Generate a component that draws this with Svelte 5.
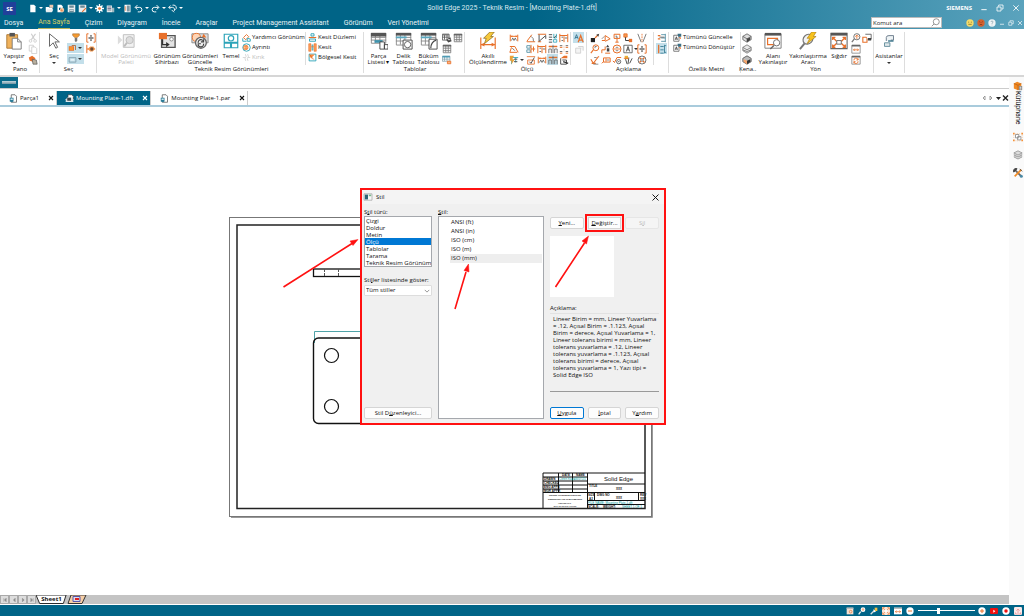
<script>
  const O = '#e8702a';
  const G = '#555';
  const T = '#2ba3b8';

  const icons = {
    newdoc: `<path d="M3 1h5l2 2v8H3z" fill="#fff"/>`,
    open: `<path d="M1 4h4l1 1h4v5H1z" fill="#fff"/><path d="M6 1h5v4H6z" fill="#f0c9b0"/><path d="M3 7h8l-2 4H1z" fill="#e9eef0"/>`,
    docred: `<path d="M2 1h5l2 2v8H2z" fill="#fff"/><path d="M4 5h3v3H4z" fill="#006487"/><circle cx="8" cy="8" r="3" fill="#f0c4a4"/><path d="M7 7v2h2" stroke="${O}" fill="none"/>`,
    save: `<path d="M1 1h9l1 1v9H1z" fill="#e8eef0"/><path d="M3 2h6v3H3zM3 7h6v4H3z" fill="#6b8b98"/><path d="M3.500 8.500h5" stroke="#fff"/>`,
    saveas: `<path d="M1 1h9l1 1v9H1z" fill="#e8eef0"/><path d="M3 2h6v3H3z" fill="#6b8b98"/><path d="M5 10l5-5 1 1-5 5z" fill="${O}"/>`,
    gear: `<path d="M6 0v12M0 6h12M2 2l8 8M10 2l-8 8" stroke="#fff" stroke-width="1.800"/><circle cx="6" cy="6" r="3.600" fill="#fff"/><circle cx="6" cy="6" r="1.800" fill="${O}"/>`,
    props: `<path d="M1 2h7v9H1z" fill="#dfe8ea"/><path d="M2 4h5M2 6h5M2 8h5" stroke="#557"/><path d="M8 5h3v6H8z" fill="#9fb8c0"/>`,
    exit: `<path d="M2 1h8v10H2z" fill="#fff"/><path d="M5 2h4v8H5z" fill="#7c98a4"/><path d="M3 3v6" stroke="${O}"/>`,
    undo: `<path d="M4.500 1.500L1.500 4.500l3 3M2 4.500h5.500a3 3 0 0 1 0 6H5" fill="none" stroke="#fff" stroke-width="1.300"/>`,
    redo: `<path d="M7.500 1.500l3 3-3 3M10 4.500H4.500a3 3 0 0 0 0 6H7" fill="none" stroke="#fff" stroke-width="1.300"/>`,
    history: `<path d="M3.500 2L1 4.500 3.500 7M1 4.500h5a3 3 0 0 1 2 5M6 1.500h2a3.500 3.500 0 0 1 2 6M5 8l3 3" fill="none" stroke="#fff" stroke-width="1.200"/>`,
    cut: `<path d="M4 1l4 7M9 1L4 8" stroke="#ccc" stroke-width="1.300"/><circle cx="3" cy="9.500" r="1.600" fill="none" stroke="#ccc"/><circle cx="8.500" cy="9.500" r="1.600" fill="none" stroke="#ccc"/>`,
    copy: `<path d="M1.500 1.500h5v7h-5z" fill="#fff" stroke="#ccc"/><path d="M4.500 3.500h4l2 2v6h-6z" fill="#fff" stroke="#ccc"/>`,
    brush: `<path d="M1 3l4-2 4 3-3 4-4-1z" fill="${O}"/><path d="M5 5l5 1 1 5-5 0z" fill="#b9b09e" stroke="#555" stroke-width=".8"/>`,
    filter: `<path d="M2 1h8v2L7.500 5.500h-3L2 3z" fill="#f59a30" stroke="#9a6b3c" stroke-width=".7"/><path d="M4.500 6h3v3L6 11 4.500 9.500z" fill="#777"/>`,
    region: `<path d="M1 3h7v6H1z" fill="${O}"/><path d="M5 2h5v6" fill="none" stroke="#b0581c"/><path d="M2 4h5v4H2z" fill="#f9932f"/>`,
    boxsel: `<path d="M1.500 3.500h9v6h-9z" fill="none" stroke="#7b97a5"/><path d="M3.500 5.500h5v2h-5z" fill="#e8f4f8"/>`,
    bracket: `<path d="M3 1H1v10h2M9 1h2v10H9" fill="none" stroke="${O}" stroke-width="1.200"/><path d="M6 2.500v7M3 6h6" stroke="#555"/><path d="M6 2l1 2H5zM6 10l1-2H5zM2.500 6l2-1v2zM9.500 6l-2-1v2z" fill="#555"/>`,
    bracketeye: `<path d="M1 1v10M1 6h3M9 6h2" stroke="${O}" stroke-width="1.200"/><path d="M2 6l3-3h4l2 3-3 3H5z" fill="#f59a50"/><circle cx="7" cy="6" r="2" fill="#6b4a35"/>`,
    aux: `<path d="M2 6l4-4 3 3-4 4z" fill="#fff" stroke="${O}" stroke-width="1.200"/><path d="M1 7v4h5M7 7l4 1v3H7z" fill="#fff" stroke="${T}" stroke-width="1.200"/>`,
    detail: `<circle cx="6" cy="6" r="5" fill="#fff" stroke="${T}" stroke-width="1.200"/><circle cx="5" cy="6" r="3" fill="#ffc18e" stroke="${O}"/><path d="M4 5h3M4 7h3" stroke="${O}"/>`,
    broken: `<path d="M1 6h3M8 6h3M4.500 1.500l1 3-1.500 3 1 3M7.500 1.500l1 3L7 7.500l1 3" fill="none" stroke="#ccc"/>`,
    cutplane: `<path d="M1 6h10" stroke="${O}" stroke-width="1.500"/><path d="M4 1h4v3H4zM2 8h8v3H2z" fill="#fff" stroke="${T}" stroke-width="1.200"/>`,
    section: `<path d="M1 1h3v10H1zM8 1h3v10H8z" fill="#ff9e5a" stroke="${O}" stroke-width=".8"/><path d="M5.500 2.500h1v7h-1z" fill="#fff" stroke="${T}"/><path d="M4.500 5h3" stroke="${O}"/>`,
    broken2: `<path d="M1.500 1.500h9v9h-9z" fill="#fff" stroke="${T}" stroke-width="1.200"/><path d="M2 2h7L5 6l2 3-5-4z" fill="#ff8b3c"/><path d="M2 2l6 7" stroke="#b0581c" stroke-width=".7"/>`,
    tbl: `<path d="M1.500 1.500h9v9h-9zM1.500 5h9M1.500 8h9M4.500 2v8M7.500 2v8" fill="#fff" stroke="#777"/><path d="M1 1h10v2H1z" fill="#666"/>`,
    tblref: `<path d="M.5 1.500h8v7h-8zM.5 5h8M3 2v6M6 2v6" fill="#fff" stroke="#555"/><path d="M.5 1h8v2h-8z" fill="#777"/><path d="M5 8l5-3 1.500 5-4 1.500z" fill="#444"/><path d="M7 8h3" stroke="#fff"/>`,
    tblor: `<path d="M.5 1.500h9v6h-9zM.5 5h9M3 2v5M6 2v5" fill="#fff" stroke="#8aa6b0"/><path d="M.5 1h9v2h-9z" fill="#4d9bb5"/><path d="M6.500 7.500h4v3h-4z" fill="#ffb27d" stroke="${O}"/>`,
    dim: `<path d="M1.500 2v8M10.500 2v8M2 4h8" stroke="${O}" stroke-width="1.200" fill="none"/><path d="M3 9l1.500-3L6 9l1.500-3L9 9" stroke="#666" fill="none"/><path d="M2 4l2-1.300v2.600zM10 4L8 2.700v2.600z" fill="${O}"/>`,
    dimang: `<path d="M1 10.500h10M1 10L7 2" stroke="${O}" stroke-width="1.200"/><path d="M6 4a6 6 0 0 1 3 6" fill="none" stroke="#666"/>`,
    dimang2: `<path d="M1 3h6l4 7M3 4L1 10h9" fill="none" stroke="${O}" stroke-width="1.200"/><path d="M4 5l3 3" stroke="#555"/>`,
    dimbox: `<path d="M1 1.500h10M1 10.500h4" stroke="${O}" stroke-width="1.400"/><path d="M2.500 2v8l8-7v4" fill="none" stroke="#555" stroke-width="1.200"/>`,
    dimlist: `<path d="M1 2h4M1 5h4M1 8h4M1 11h4" stroke="#555" stroke-width="1.200"/><path d="M7 1v5h3V1M6.500 8h4v3h-4z" fill="none" stroke="${T}"/><path d="M7 6l3-3" stroke="#333"/>`,
    coord: `<path d="M1 2h4v3H1zM1 7h4v3H1z" fill="none" stroke="#4b8aa0"/><path d="M6 1v10M6 6h5M9 3v6" stroke="${O}" stroke-width="1.200"/>`,
    dimchain: `<path d="M1 1v10M6 4v7M10.500 1v10M1 3h9" stroke="${O}" stroke-width="1.200"/><path d="M3 5h2M7 6h3M3 9h2" stroke="#555"/>`,
    four: `<path d="M1 2h3M8 2h3M1 9h3M8 9h3" stroke="#555"/><path d="M1 4h3M8 4h3M1 11h3M8 11h3" stroke="${O}" stroke-width="1.200"/><path d="M6 2v8" stroke="#f0b08a" stroke-dasharray="1 1"/>`,
    autodim: `<path d="M3 2v9M3 3h8M8 3v6" stroke="${T}" fill="none"/><path d="M1 1l5 0-2 4 3 0-4 6 0-4H1z" fill="#e9a13a"/><path d="M6 8h4M6 5h4" stroke="#555" stroke-width="1.200"/>`,
    dimcheck: `<path d="M1 2h10M2 6h8v5H2z" fill="none" stroke="${O}"/><path d="M4 8l2 2 4-7" fill="none" stroke="#555" stroke-width="1.200"/>`,
    align: `<path d="M1 11V6h3v5M8 11V6h3v5M1 3h10M6 1v10" fill="none" stroke="#666"/><path d="M1 3h4M7 3h4" stroke="${O}" stroke-width="1.600"/>`,
    track: `<path d="M2 4l4-3h4v3H6z" fill="${O}"/><path d="M2 4v7h7V6H4" fill="none" stroke="#555" stroke-width="1.200"/><path d="M5 8l6 2" stroke="#333" stroke-width="1.400"/>`,
    aa: `<path d="M1 7l2-5 2 5M1.500 5.500h3" fill="none" stroke="#2b6c88"/><path d="M5 11l3-8 3 8M6 8.500h4" fill="none" stroke="${O}" stroke-width="1.500"/>`,
    style: `<path d="M2 5h6v6H2zM5 3h6v5" fill="#f4f4f4" stroke="#ccc"/>`,
    leadera: `<path d="M1 6h5v5H1z" fill="#222"/><path d="M6 6l4-4" stroke="${O}" stroke-width="1.500"/><path d="M11 1L7.500 2l2.500 2.500z" fill="#444"/>`,
    datum: `<path d="M1 9h4M5 9V3l6 4-6 3" fill="none" stroke="${O}" stroke-width="1.200"/><path d="M1 7l3-3" stroke="#777"/>`,
    frame: `<path d="M2.500 1.500h7v5h-7zM6 7v4M4 11h4" fill="none" stroke="${O}" stroke-width="1.200"/><path d="M5 3v2h2" stroke="#555" fill="none"/>`,
    conn: `<path d="M1 1h4v4H1z" fill="#f59a50" stroke="${O}"/><path d="M3 5v4h5" fill="none" stroke="#444" stroke-width="1.200"/><path d="M7 7h4v4H7z" fill="${O}"/>`,
    vlines: `<path d="M1 1l4 10M11 1L7 11" stroke="#666"/><path d="M6 1v10" stroke="${O}" stroke-dasharray="2 1"/>`,
    mag: `<circle cx="7" cy="4.500" r="3.500" fill="#fff" stroke="${O}" stroke-width="1.200"/><path d="M4 7l-3 4" stroke="${O}" stroke-width="1.300"/><path d="M6 5V3h2" stroke="#666" fill="none"/>`,
    weld: `<path d="M1 11V7h4V3M5 11h6" fill="none" stroke="${O}" stroke-width="1.200"/><path d="M8 1l2 3H6zM7 5h3v4H7z" fill="#444"/>`,
    circ: `<circle cx="6" cy="6" r="4.800" fill="#fff" stroke="${O}" stroke-width="1.200"/><path d="M2 6h8" stroke="${O}"/><path d="M4.500 4h3M4.500 8h3" stroke="#777"/>`,
    abox: `<path d="M1 1.500h10v9H1z" fill="#fff" stroke="#555"/><path d="M4 9l2-6 2 6M5 7h2" fill="none" stroke="#333"/>`,
    finish: `<path d="M2 10h5M1 5l3 5 6-8h1" fill="none" stroke="${O}" stroke-width="1.300"/><path d="M5 3h3M4 11h6" stroke="#777"/>`,
    tol: `<path d="M3 3.500h8v5H3zM6 4v4M1 10l2-2" fill="#fff" stroke="${O}" stroke-width="1.200"/><path d="M7 6h3" stroke="#777"/>`,
    balloon: `<path d="M1 7l2 2 3-6h5" fill="none" stroke="${O}" stroke-width="1.200"/><circle cx="8" cy="8" r="2.500" fill="#fff" stroke="#555"/><path d="M7 8h2" stroke="#555"/>`,
    hatch: `<path d="M2 1h4v4H2z" fill="#e9b13a"/><path d="M3 5l2 6M7 3l-1 8M11 4L8 10" stroke="#555" stroke-width="1.200"/><path d="M1 4h6" stroke="${O}"/>`,
    wheel: `<circle cx="6" cy="6" r="4.800" fill="#fff" stroke="#777" stroke-width="1.200"/><path d="M3 3l6 6M9 3L3 9" stroke="${O}" stroke-width="1.600"/><circle cx="6" cy="6" r="1.500" fill="#fff" stroke="#777"/>`,
    levels: `<path d="M10 1v10M10 2H5M10 6H5M10 10H5" stroke="#4b8aa0" fill="none"/><path d="M1 3l3 0M1 7h3" stroke="${O}" stroke-width="1.500"/><path d="M3 5h6" stroke="#555"/>`,
    levels2: `<path d="M9 1v10M9 2h2M9 10h2M4 3h4M4 7h4M4 11h4" stroke="#4b8aa0" fill="none" stroke-width="1.200"/><path d="M2 1v10" stroke="${O}" stroke-width="1.500"/>`,
    textupd: `<path d="M1 3h7v8H1z" fill="#fff" stroke="#555"/><path d="M3 9l1.500-4L6 9M3.500 8h2" fill="none" stroke="#333"/><path d="M6 1h5v4H7z" fill="#3c6f86"/><path d="M8 6h2v2" fill="none" stroke="${O}"/>`,
    cubea: `<path d="M1 4l5-3 5 3v4l-5 3-5-3z" fill="#ddd" stroke="#666"/><path d="M1 4l5 3 5-3M6 7v4" fill="none" stroke="#666"/><path d="M6 7l4-2v3l-4 3z" fill="#444"/>`,
    cubeb: `<path d="M1 4l5-3 5 3v4l-5 3-5-3z" fill="#e8e8e8" stroke="#777"/><path d="M1 4l5 3 5-3M1 7l5 2 5-2" fill="none" stroke="#777"/>`,
    cubec: `<path d="M1 4l5-3 5 3v4l-5 3-5-3z" fill="#bbb" stroke="#555"/><path d="M2 5l4 2v4L2 8z" fill="#f5a56b"/><path d="M6 7l4-2v3l-4 3z" fill="#333"/>`,
    zoomup: `<circle cx="7" cy="4.500" r="3.700" fill="#fff" stroke="#777" stroke-width="1.200"/><path d="M4 7l-3 4" stroke="#777" stroke-width="1.500"/><path d="M7 7V2.500M5 4.500l2-2 2 2" fill="none" stroke="${O}"/>`,
    winbox: `<path d="M1 5h5v6H1z" fill="#fff" stroke="${O}" stroke-width="1.300"/><path d="M4 1.500h7v6H7" fill="#fff" stroke="#555"/><path d="M7 6h4v3H7z" fill="#444"/>`,
    pan: `<path d="M1 1.500h10v9.500H1z" fill="#fff" stroke="#888"/><path d="M1 1h10v2H1z" fill="#666"/><path d="M3 7h6M4.500 5.500L3 7l1.500 1.500M7.500 5.500L9 7 7.500 8.500" fill="none" stroke="${O}"/>`,
    refresh: `<path d="M1 1.500h10v9.500H1z" fill="#fff" stroke="#888"/><path d="M1 1h10v2H1z" fill="#666"/><path d="M3.500 6.500a2.500 2.500 0 0 1 5-.5M8.500 7.500a2.500 2.500 0 0 1-5 .5M8.500 4v2h-2M3.500 10V8h2" fill="none" stroke="${O}"/>`,
    part: `<path d="M3 1h5l2 2v8H3z" fill="#fff" stroke="#555"/><path d="M1 5h5v5l-2 1-3-1z" fill="#2b7c98"/><path d="M2 6h3v2H2z" fill="#cfe7ef"/>`,
    draft: `<path d="M4 1h5l2 2v5H4z" fill="#fff" stroke="#333" stroke-width=".8"/><path d="M1 7l3-3h4l3 3v3H1z" fill="#d7dde0"/><path d="M3 5h5v4H3z" fill="#39444a"/><path d="M1 10h10" stroke="#fff"/>`,
    lib: `<path d="M1 3l4-2 5 2v6l-4 2-5-2z" fill="#f08a24"/><path d="M1 3l5 2 4-2M6 5v6" fill="none" stroke="#b85c10" stroke-width=".8"/><path d="M7 6h4v5H7z" fill="#888"/><path d="M8 7.500h2M8 9.500h2" stroke="#fff"/>`,
    group: `<path d="M3 3h4v4H3zM5.500 5.500h4v4h-4z" fill="#fff" stroke="#888"/><path d="M0 1h2v2H0zM10 1h2v2h-2zM0 9h2v2H0zM10 9h2v2h-2z" fill="#f5923a"/><path d="M3 2h6M1 4v4M3 10.500h6M11 4v4" stroke="#f0b078" stroke-dasharray="1 1" stroke-width=".8"/>`,
    layers: `<path d="M1 3.500l5-2.500 5 2.500v5l-5 2.500-5-2.500z" fill="#ccc"/><path d="M1 3.500l5-2.500 5 2.500-5 2.500zM1 5.800l5 2.500 5-2.500M1 8.300l5 2.500 5-2.500" fill="#ddd" stroke="#888" stroke-width=".8"/>`,
    tools: `<path d="M2 2l8 8" stroke="#666" stroke-width="2.200"/><path d="M10 2L2 10" stroke="#f08a24" stroke-width="2"/><path d="M0 3l3-3 2 1-4 4zM8 1l3 3" fill="#444" stroke="#444"/><circle cx="10" cy="10" r="1.800" fill="#4a8aa5"/>`,
    s1: `<path d="M1 1h10v10H1z" fill="#f3dfd2"/><path d="M1 1h10v2H1z" fill="#bbb"/><circle cx="7" cy="7" r="2" fill="none" stroke="${O}"/>`,
    s2: `<circle cx="7.500" cy="4" r="3.500" fill="#fff"/><path d="M4 7l-3 4" stroke="#eee" stroke-width="2"/><path d="M7.500 6V2.500M6 4l1.500-1.500L9 4" fill="none" stroke="${O}"/>`,
    s3: `<path d="M7 1h4v5H7z" fill="#f5c242"/><path d="M1 11l6-6" stroke="#ddd" stroke-width="2"/><path d="M5 3l4 4-3 1z" fill="#fff"/>`,
    s4: `<path d="M0 0h12v12H0z" fill="#fbe6d8"/><path d="M2 2l8 8M10 2l-8 8" stroke="${O}"/><path d="M1 4V1h3M8 1h3v3M11 8v3H8M4 11H1V8" fill="none" stroke="${O}"/><path d="M4 4h4v4H4z" fill="#fff"/>`,
    s5: `<path d="M0 1h12v10H0z" fill="#fff"/><path d="M0 1h12v2H0z" fill="#bbb"/><path d="M2 7h8M4 5.500L2 7l2 1.500M8 5.500L10 7 8 8.500" fill="none" stroke="${O}"/>`,
    minus: `<circle cx="6" cy="6" r="5.500" fill="#fff"/><path d="M3 6h6" stroke="${O}" stroke-width="1.500"/>`,
    plus: `<circle cx="6" cy="6" r="5.500" fill="#fff"/><path d="M3 6h6M6 3v6" stroke="${O}" stroke-width="1.500"/>`,
    yt: `<rect x="0" y="1.500" width="12" height="9" rx="2" fill="#e11"/><path d="M5 4l3 2.200L5 8.500z" fill="#fff"/>`,
    rec: `<circle cx="6" cy="6" r="5.500" fill="#fff"/><circle cx="6" cy="6" r="2.600" fill="#e11"/>`,
    up: `<rect width="12" height="12" rx="2" fill="#fbe9e9"/><path d="M6 9V3M3.500 5.500L6 3l2.500 2.500M2 8v2.500h8V8" fill="none" stroke="#e9898b"/>`,
    min: `<path d="M2 8.500h8" stroke="#fff" stroke-width="1.400"/>`,
    restore: `<path d="M1.500 4.500h6v6h-6zM4 4V1.500h6.500v6H8" fill="none" stroke="#fff" stroke-width="1.200"/>`,
    close: `<path d="M2 2l8 8M10 2l-8 8" stroke="currentColor" stroke-width="1.300"/>`,
    closeb: `<path d="M2 2l8 8M10 2l-8 8" stroke="currentColor" stroke-width="2.200"/>`,
    happy: `<circle cx="6" cy="6" r="5.500" fill="#f6dc6b"/><path d="M4 4v1.500M8 4v1.500M3.500 8h5" stroke="#665a20"/>`,
    sad: `<circle cx="6" cy="6" r="5.500" fill="#d4622f"/><path d="M3.500 4l1.500 1M8.500 4L7 5M4 9q2-2 4 0" fill="none" stroke="#6b2a10"/>`,
    help: `<circle cx="6" cy="6" r="5.500" fill="#eef4f6"/><path d="M4.500 4.500q0-1.500 1.500-1.500t1.500 1.500Q7.500 5.500 6 6.500v1M6 8.500v1" fill="none" stroke="#7f9aa5"/>`,
    search: `<circle cx="7" cy="5" r="4" fill="none" stroke="#777"/><path d="M4 8l-3 3" stroke="#777"/>`
  };

  const big = {
    paste: `<path d="M2 3h12v15H2z" fill="#f0b25c" stroke="#a97430"/><path d="M5 1h6v4H5z" fill="#555"/><path d="M8 7h6l4 4v8H8z" fill="#fff" stroke="#777"/><path d="M14 7v4h4" fill="none" stroke="#777"/>`,
    cursor: `<path d="M5 2v14l4-4 3 6 2-1-3-6h5z" fill="#fff" stroke="#666" stroke-width="1.100"/>`,
    palette: `<path d="M1 4l5 5-5 5z" fill="#ddd"/><path d="M7 3h12v14H7z" fill="#f2f2f2" stroke="#bbb"/><circle cx="14" cy="9" r="4" fill="#ddd" stroke="#bbb"/><path d="M11 12l-3 4" stroke="#bbb" stroke-width="2"/>`,
    wizard: `<path d="M4 4h15v13H4z" fill="#e4e4e4" stroke="#555" stroke-width="1.500"/><path d="M1 1h9v7H1z" fill="${O}"/><path d="M5 8v6h5" fill="none" stroke="#333" stroke-width="1.500"/><path d="M9 11l4 3-4 3z" fill="#333"/><circle cx="15" cy="8" r="2" fill="#fff" stroke="#888"/>`,
    update: `<path d="M1 2h18v10H1z" fill="#ddd" stroke="#888"/><circle cx="6" cy="6" r="4.500" fill="#ffd5b5" stroke="${O}"/><path d="M14 2l3 4h-5z" fill="${O}"/><circle cx="11" cy="12" r="6" fill="#eee" stroke="#666" stroke-width="1.500"/><path d="M8 12a3 3 0 0 1 6-1M14 13a3 3 0 0 1-6 1M14 8v3h-3M8 16v-3h3" fill="none" stroke="#444" stroke-width="1.200"/>`,
    basic: `<path d="M2.500 2.500h15v9h-15zM2.500 12.500h7v5h-7zM10.500 12.500h7v5h-7z" fill="#fff" stroke="${T}" stroke-width="1.300"/><circle cx="10" cy="7" r="3" fill="none" stroke="${T}" stroke-width="1.300"/>`,
    parts: `<path d="M1.500 1.500h16v11h-16zM1 6h17M1 9h17M6 2v10M11 2v10" fill="#fff" stroke="#888"/><path d="M1 1h17v4H1z" fill="#555"/><path d="M5 9h9v3H5z" fill="#3f93ad"/><path d="M11 11h5v8h-5zM16 14h4v5h-4z" fill="#fff" stroke="#444"/>`,
    hole: `<path d="M1.500 1.500h16v13h-16zM1 6h17M1 10h17M6 2v12M11 2v12" fill="#fff" stroke="#888"/><path d="M1 1h17v3H1z" fill="#555"/><path d="M1 5h12v2H1z" fill="#5ba8c0"/><path d="M9 9h10v10H9z" fill="#fff" stroke="#444"/><circle cx="14" cy="14" r="3.500" fill="#fff" stroke="#555"/>`,
    bend: `<path d="M1.500 1.500h16v13h-16zM1 6h17M1 10h17M6 2v12M11 2v12" fill="#fff" stroke="#888"/><path d="M1 1h17v3H1z" fill="#555"/><path d="M1 5h12v2H1z" fill="#5ba8c0"/><path d="M10 8h9v11h-9z" fill="#fff" stroke="#444"/><path d="M12 18q0-7 6-9" fill="none" stroke="#444" stroke-width="1.300"/>`,
    smart: `<path d="M2 6v13M18 6v13M2 14h16" stroke="${O}" stroke-width="1.300"/><path d="M2 14l4-2v4zM18 14l-4-2v4z" fill="${O}"/><path d="M12 0h5l-4 5h3L6 13l2-6H5z" fill="#f7c93c" stroke="#8a6a20" stroke-width=".8"/>`,
    zoomarea: `<path d="M1 2h18v16H1z" fill="#fff" stroke="#777"/><path d="M1 1h18v3H1z" fill="#555"/><path d="M4 7h11v7H4z" fill="#fff" stroke="${O}" stroke-width="1.300"/><circle cx="14" cy="12" r="3.500" fill="#fff" stroke="#666"/><path d="M11 15l-4 4" stroke="#666" stroke-width="1.500"/>`,
    zoomtool: `<ellipse cx="10" cy="8" rx="6" ry="5" transform="rotate(-45 10 8)" fill="#f2f2f2" stroke="#777" stroke-width="1.300"/><path d="M6 13l-5 6" stroke="#777" stroke-width="2.200"/><path d="M14 0h5l-3 5h3L9 13l3-6h-3z" fill="#f7c21c" stroke="#a87b10" stroke-width=".7"/>`,
    fit: `<path d="M1 1.500h18v17H1z" fill="#fff" stroke="#666" stroke-width="1.200"/><path d="M1 1h18v3H1z" fill="#555"/><path d="M3 9V6h3M14 6h3v3M17 14v3h-3M6 17H3v-3M3.500 6.500l4 4M16.500 6.500l-4 4M3.500 16.500l4-4M16.500 16.500l-4-4" fill="none" stroke="${O}" stroke-width="1.500"/><path d="M7.500 9.500h5v4h-5z" fill="#fff" stroke="#666"/>`,
    assist: `<path d="M7 10V6q0-2 3-2h5v5h-3" fill="#eef3f5" stroke="#678"/><path d="M5 12h6v4H5z" fill="#dfe7ea" stroke="#5f8a99"/><path d="M9 10h6" stroke="#2f6d85" stroke-width="1.500"/>`
  };

  const qat = [['newdoc', 1], ['open'], ['docred'], ['save'], ['saveas', 1], ['gear'], ['props', 1], ['exit'], ['undo', 1], ['redo', 1], ['history', 1]];
  const menus = ['Dosya', 'Ana Sayfa', 'Çizim', 'Diyagram', 'İncele', 'Araçlar', 'Project Management Assistant', 'Görünüm', 'Veri Yönetimi'];
  const dimIcons = ['dim', 'dimang', 'dimbox', 'dimlist', 'dimchain', 'dimang2', 'coord', 'dimchain', 'align', 'four', 'autodim', 'dimcheck', 'dim', 'align', 'track'];
  const noteIcons = ['leadera', 'datum', 'frame', 'conn', 'vlines', 'mag', 'weld', 'circ', 'abox', 'bracket', 'finish', 'tol', 'balloon', 'hatch', 'wheel'];
  const types = ['Çizgi', 'Doldur', 'Metin', 'Ölçü', 'Tablolar', 'Tarama', 'Teknik Resim Görünümleri'];
  const styles = ['ANSI (ft)', 'ANSI (in)', 'ISO (cm)', 'ISO (m)', 'ISO (mm)'];
  let type = $state('Ölçü');
  let current = $state('ISO (mm)');
  let zoom = $state(36);
</script>

{#snippet ic(name)}
  <svg class="ic" viewBox="0 0 12 12" aria-hidden="true">{@html icons[name]}</svg>
{/snippet}

{#snippet bigbtn(icon, a, b, cls = '', caret = false)}
  <button class="big {cls}">
    <svg viewBox="0 0 20 20" aria-hidden="true">{@html big[icon]}</svg>
    <span>{a}</span>
    {#if b}<span>{b}</span>{/if}
    {#if caret}<i class="caret"></i>{/if}
  </button>
{/snippet}

{#snippet row(icon, text, cls = '')}
  <button class="row {cls}">{@render ic(icon)}<span>{text}</span></button>
{/snippet}

{#snippet small(icon, cls = '')}
  <button class="small {cls}" aria-label={icon}>{@render ic(icon)}{#if cls === 'menu'}<i class="caret"></i>{/if}</button>
{/snippet}

<div class="app">
  <header>
    <div class="titlebar">
      <div class="quick">
        <span class="logo">SE</span>
        {#each qat as [name, drop]}
          <button class="q" aria-label={name}>{@render ic(name)}</button>
          {#if drop}<i class="caret light"></i>{/if}
        {/each}
      </div>
      <h1>Solid Edge 2025 - Teknik Resim - [Mounting Plate-1.dft]</h1>
      <div class="win">
        <b>SIEMENS</b>
        <button aria-label="min">{@render ic('min')}</button>
        <button aria-label="restore">{@render ic('restore')}</button>
        <button aria-label="close">{@render ic('close')}</button>
      </div>
    </div>
    <nav>
      {#each menus as m}
        <a href="#{m}" class:active={m === 'Ana Sayfa'}>{m}</a>
      {/each}
      <div class="search">
        <input type="text" placeholder="Komut ara" aria-label="Komut ara" />
        {@render ic('search')}
      </div>
      <div class="mood">
        {#each ['happy', 'sad', 'help'] as n}<button aria-label={n}>{@render ic(n)}</button>{/each}
        {#each ['min', 'restore', 'close'] as n}<button class="tiny" aria-label={n}>{@render ic(n)}</button>{/each}
      </div>
    </nav>
  </header>

  <div class="ribbon">
    <section class="g pano">
      <div class="body">
        {@render bigbtn('paste', 'Yapıştır', '', 'w26', true)}
        <div class="col">{@render small('cut')}{@render small('copy')}{@render small('brush')}</div>
      </div>
      <h2>Pano</h2>
    </section>
    <section class="g sec">
      <div class="body">
        {@render bigbtn('cursor', 'Seç', '', 'w26', true)}
        <div class="col wide">
          {@render small('filter')}
          <button class="drop" aria-label="region">{@render ic('region')}<i class="caret"></i></button>
          <button class="drop" aria-label="box">{@render ic('boxsel')}<i class="caret"></i></button>
        </div>
        <div class="col">{@render small('bracket')}{@render small('bracketeye')}</div>
      </div>
      <h2>Seç</h2>
    </section>
    <section class="g views">
      <div class="body">
        {@render bigbtn('palette', 'Model Görünümü', 'Paleti', 'w52 off')}
        {@render bigbtn('wizard', 'Görünüm', 'Sihirbazı', 'w30')}
        {@render bigbtn('update', 'Görünümleri', 'Güncelle', 'w36')}
        {@render bigbtn('basic', 'Temel', '', 'w26')}
        <div class="rows first">{@render row('aux', 'Yardımcı Görünüm')}{@render row('detail', 'Ayrıntı')}{@render row('broken', 'Kırık', 'off')}</div>
        <div class="rows sep">{@render row('cutplane', 'Kesit Düzlemi')}{@render row('section', 'Kesit')}{@render row('broken2', 'Bölgesel Kesit')}</div>
      </div>
      <h2>Teknik Resim Görünümleri</h2>
    </section>
    <section class="g tables">
      <div class="body">
        {@render bigbtn('parts', 'Parça', 'Listesi ▾', 'w24')}
        {@render bigbtn('hole', 'Delik', 'Tablosu', 'w24')}
        {@render bigbtn('bend', 'Büküm', 'Tablosu', 'w24')}
        <div class="col">{@render small('tblref')}{@render small('tbl')}{@render small('tblor')}</div>
        <div class="col">{@render small('tbl')}</div>
      </div>
      <h2>Tablolar</h2>
    </section>
    <section class="g dims">
      <div class="body">
        {@render bigbtn('smart', 'Akıllı', 'Ölçülendirme', 'w42')}
        <div class="grid">
          {#each dimIcons as n, i}{@render small(n, i === 13 ? 'on' : i === 10 ? 'menu' : '')}{/each}
        </div>
        <div class="col sep">{@render small('aa', 'on')}{@render small('style')}</div>
      </div>
      <h2>Ölçü</h2>
    </section>
    <section class="g notes">
      <div class="body">
        <div class="grid note">
          {#each noteIcons as n, i}{@render small(n, i === 8 ? 'menu' : '')}{/each}
        </div>
        <div class="col sep">{@render small('levels')}{@render small('levels2', 'on')}</div>
      </div>
      <h2>Açıklama</h2>
    </section>
    <section class="g props">
      <div class="body">
        <div class="rows">{@render row('textupd', 'Tümünü Güncelle')}{@render row('textupd', 'Tümünü Dönüştür')}</div>
      </div>
      <h2>Özellik Metni</h2>
    </section>
    <section class="g edges">
      <div class="body">
        <div class="col">{@render small('cubea')}{@render small('cubeb')}{@render small('cubec')}</div>
      </div>
      <h2>Kena..</h2>
    </section>
    <section class="g orient">
      <div class="body">
        {@render bigbtn('zoomarea', 'Alanı', 'Yakınlaştır', 'w30')}
        {@render bigbtn('zoomtool', 'Yakınlaştırma', 'Aracı', 'w42')}
        {@render bigbtn('fit', 'Sığdır', '', 'w20')}
        <div class="col">{@render small('zoomup')}{@render small('pan')}{@render small('refresh')}</div>
        <div class="col">{@render small('winbox')}</div>
      </div>
      <h2>Yön</h2>
    </section>
    <section class="g assist">
      <div class="body">{@render bigbtn('assist', 'Asistanlar', '', 'w30', true)}</div>
    </section>
  </div>

  <div class="work">
    <div class="center">
      <div class="strip"><span class="chip"></span></div>
      <div class="tabs">
        <div class="tab">{@render ic('part')}<span>Parça1</span><button aria-label="close">{@render ic('closeb')}</button></div>
        <div class="tab active">{@render ic('draft')}<span>Mounting Plate-1.dft</span><button aria-label="close">{@render ic('closeb')}</button></div>
        <div class="tab">{@render ic('part')}<span>Mounting Plate-1.par</span><button aria-label="close">{@render ic('closeb')}</button></div>
        <div class="tabnav">
          <svg viewBox="0 0 28 8" aria-hidden="true"><path d="M4 2v4L2 4zM9 2v4l2-2z" fill="#fff" stroke="#888" stroke-width=".8"/><path d="M15 3h5l-2.500 3z" fill="#222"/><path d="M22 1.500l5 5M27 1.500l-5 5" stroke="#222" stroke-width="1.400"/></svg>
        </div>
      </div>

      <main>
        <svg class="sheet" aria-hidden="true">
          <g transform="translate(0 -107)">
            <path d="M652.500 219v298.500H231" fill="none" stroke="#999"/>
            <rect x="229.500" y="217.500" width="422" height="299" fill="#fff" stroke="#777"/>
            <rect x="237" y="225" width="408" height="283.500" fill="none" stroke="#222" stroke-width="1.500"/>
            <rect x="313.500" y="269" width="300" height="7.500" fill="none" stroke="#111" stroke-width="1.300"/>
            <path d="M324.500 269v7M338.500 269v7" stroke="#555" stroke-dasharray="3 1"/>
            <path d="M314.500 343v-11.500H600" fill="none" stroke="#4fa3a8"/>
            <rect x="313.500" y="338" width="300" height="85.500" rx="5" fill="none" stroke="#111" stroke-width="1.400"/>
            <circle cx="331.500" cy="355.500" r="7" fill="none" stroke="#111" stroke-width="1.200"/>
            <circle cx="331.500" cy="406.500" r="7" fill="none" stroke="#111" stroke-width="1.200"/>
            <path d="M543 473h102M543 473v35M587.500 473v35M587.500 484H645M543 492.500h102M587.500 500.500H645M587.500 504.500H645M594.500 493v7M638.500 493v7M558.500 473v19M572.500 473v19M543 477h44M543 481h44M543 485h44M543 489h44" fill="none" stroke="#111"/>
            <g class="tb">
              <text x="604" y="481" class="name">Solid Edge</text>
              <text x="562" y="476">DATE</text><text x="576" y="476">NAME</text>
              <text x="544" y="480">DRAWN</text><text x="544" y="484">CHECKED</text><text x="544" y="488">ENG APPR</text><text x="544" y="492">MGR APPR</text>
              <text x="559" y="480" class="cy">Ceren Kaya</text><text x="574" y="480" class="cy">08/07/25</text>
              <text x="565" y="496" class="mid2">UNLESS OTHERWISE SPECIFIED</text><text x="565" y="500" class="mid2">DIMENSIONS ARE IN MILLIMETERS</text><text x="565" y="504" class="mid2">ANGLES ±X.X°</text><text x="565" y="507" class="mid2">2 PL ±X.XX 3 PL ±X.XXX</text>
              <text x="589" y="487">TITLE</text><text x="616" y="490">XXX</text>
              <text x="588" y="496">SIZE</text><text x="597" y="496">DWG NO</text><text x="640" y="496">REV</text><text x="589" y="500">A2</text><text x="616" y="499">XXX</text><text x="640" y="500">XXX</text>
              <text x="588" y="504" class="cy">FILE NAME: Mounting Plate-1.dft</text>
              <text x="588" y="508">SCALE:</text><text x="603" y="508">WEIGHT:</text><text x="622" y="508" class="cy">SHEET 1 OF 1</text>
            </g>
          </g>
        </svg>

        <div class="dialog" role="dialog" aria-label="Stil">
          <div class="dtitle">
            <svg viewBox="0 0 12 10" aria-hidden="true"><path d="M1 1h10v8H1z" fill="#f8f8f8" stroke="#aaa"/><path d="M2 2h4v6H2z" fill="#2c6476"/><path d="M7 2h3v2H7z" fill="#78b98a"/></svg>
            <span>Stil</span>
            <button aria-label="close">{@render ic('close')}</button>
          </div>
          <div class="dbody">
            <div class="left">
              <label for="types">S<u>t</u>il türü:</label>
              <select id="types" size="7" bind:value={type}>
                {#each types as t}<option>{t}</option>{/each}
              </select>
              <label for="show" class="second">Sti<u>l</u>ler listesinde göster:</label>
              <div class="combo">
                <select id="show"><option>Tüm stiller</option></select>
                <svg viewBox="0 0 8 8" aria-hidden="true"><path d="M1 2.500l3 3 3-3" fill="none" stroke="#777"/></svg>
              </div>
              <button class="btn editor">Stil D<u>ü</u>zenleyici...</button>
            </div>
            <div class="mid">
              <label for="styles"><u>S</u>til:</label>
              <select id="styles" size="7" bind:value={current}>
                {#each styles as s}<option>{s}</option>{/each}
              </select>
            </div>
            <div class="right">
              <div class="btns">
                <button class="btn"><u>Y</u>eni...</button>
                <button class="btn marked"><u>D</u>eğiştir...</button>
                <button class="btn" disabled>S<u>i</u>l</button>
              </div>
              <div class="preview"></div>
              <div class="desc-label">Açıklama:</div>
              <p>Lineer Birim = mm, Lineer Yuvarlama = .12, Açısal Birim = .1.123, Açısal Birim = derece, Açısal Yuvarlama = 1, Lineer tolerans birimi = mm, Lineer tolerans yuvarlama = .12, Lineer tolerans yuvarlama = .1.123, Açısal tolerans birimi = derece, Açısal tolerans yuvarlama = 1, Yazı tipi = Solid Edge ISO</p>
              <div class="btns bottom">
                <button class="btn primary"><u>U</u>ygula</button>
                <button class="btn"><u>İ</u>ptal</button>
                <button class="btn">Y<u>a</u>rdım</button>
              </div>
            </div>
          </div>
        </div>

        <svg class="arrows" aria-hidden="true">
          <g transform="translate(0 -107)" stroke="#f11" fill="#f11">
            <path d="M283.500 287L352 243.500M455 309l11-37M555.500 287l29-44" stroke-width="1.600" fill="none"/>
            <path d="M358 239.500l-5 6-3-4.500zM468.500 264l.5 8-5-1.500zM588.500 236l-2 8-4.500-3z" stroke-width=".5"/>
          </g>
        </svg>
      </main>

      <div class="sheets">
        {#each ['M7 2L4 5l3 3zM3 2v6', 'M7 2L4 5l3 3z', 'M4 2l3 3-3 3z', 'M3 2l3 3-3 3zM7 2v6'] as d}
          <button class="step" aria-label="sheet"><svg viewBox="0 0 10 10"><path {d} fill="#888" stroke="#888" stroke-width=".8"/></svg></button>
        {/each}
        <button class="sheettab"><svg viewBox="0 0 34 9" preserveAspectRatio="none" aria-hidden="true"><path d="M0 0l4 8.500h26L33 0z" fill="#fff" stroke="#222"/></svg><span>Sheet1</span></button>
        <button class="newsheet" aria-label="new"><svg viewBox="0 0 20 9" aria-hidden="true"><path d="M4 0L1 8.500h14L19 0z" fill="#f6cfa6" stroke="#333"/><path d="M6 1.500h7v5H6z" fill="#dde" stroke="#55a"/><path d="M8 3h4v2H8z" fill="#d22"/></svg></button>
      </div>
    </div>

    <aside>
      <button aria-label="lib">{@render ic('lib')}</button>
      <span>Kütüphane</span>
      <button aria-label="group">{@render ic('group')}</button>
      <button aria-label="layers">{@render ic('layers')}</button>
      <button aria-label="tools">{@render ic('tools')}</button>
    </aside>
  </div>

  <footer>
    {#each ['s1', 's2', 's3', 's4', 's5', 'minus'] as n}<button aria-label={n}>{@render ic(n)}</button>{/each}
    <input type="range" aria-label="zoom" min="0" max="100" bind:value={zoom} />
    {#each ['plus', 'yt', 'rec', 'up'] as n}<button aria-label={n}>{@render ic(n)}</button>{/each}
  </footer>
</div>

<style>
  :global(body) { background: #fff; }
  .app { height: 100vh; display: flex; flex-direction: column; font: 6px/7px "Open Sans", "Noto Sans", sans-serif; color: #111; overflow: hidden; }
  button, input, select { font: inherit; color: inherit; border: 0; padding: 0; margin: 0; background: none; border-radius: 0; outline: 0; }
  svg { display: block; flex: none; }
  .ic { width: 9px; height: 9px; }
  h1, h2, p { margin: 0; font: inherit; }
  u { text-decoration-thickness: 1px; text-underline-offset: 0; }
  .caret { width: 0; height: 0; border: 2px solid transparent; border-top-color: #333; border-bottom: 0; }
  .caret.light { border-top-color: #fff; }

  header { background: linear-gradient(90deg, #006487 52%, #2a82a1 75%, #5ba3bd); color: #fff; flex: none; }
  .titlebar { height: 16px; display: grid; grid-template-columns: 1fr auto 1fr; align-items: center; }
  .quick { display: flex; align-items: center; padding-left: 3px; }
  .logo { width: 13px; height: 13px; line-height: 14px; background: #20409a; font-weight: 700; text-align: center; margin-right: 11px; }
  .q { margin: 0 1px; }
  .quick .caret { margin: 0 1px; }
  h1 { color: #d9e8ee; font: 7px/14px Roboto, "Open Sans", sans-serif; }
  .win { display: flex; justify-content: flex-end; align-items: center; gap: 8px; padding-right: 4px; }
  .win b { font-size: 6px; }
  .win .ic { width: 8px; height: 8px; }
  nav { height: 13px; display: flex; align-items: center; gap: 15px; padding: 0 1px 0 4px; font: 7px/12px Roboto, "Open Sans", sans-serif; }
  nav a { color: #e8f2f5; text-decoration: none; white-space: nowrap; }
  nav a.active { color: #d9cf62; border-bottom: 1px solid #b9b45c; line-height: 11px; }
  .search { margin-left: auto; width: 71px; height: 11px; box-sizing: border-box; background: #fff; border: 1px solid #bbb; display: flex; align-items: center; padding: 0 1px; }
  .search input { flex: 1; min-width: 0; font: 6px/8px "Open Sans", sans-serif; }
  .search input::placeholder { color: #222; }
  .mood { display: flex; align-items: center; gap: 3px; margin-left: 9px; }
  .mood .ic { width: 8px; height: 8px; }
  .mood .tiny .ic { width: 6px; height: 6px; }

  .ribbon { flex: none; display: flex; height: 46px; border-bottom: 2px solid #d6d6d6; background: #fff; white-space: nowrap; }
  .g { box-sizing: border-box; border-right: 1px solid #ddd; margin: 3px 0 2px; padding-left: 1px; display: flex; flex-direction: column; }
  .g .body { display: flex; height: 33px; }
  .g h2 { text-align: center; line-height: 8px; }
  .pano { width: 40px; }
  .sec { width: 57px; }
  .views { width: 267px; padding-left: 3px; }
  .tables { width: 101px; padding-left: 2px; }
  .dims { width: 122px; padding-left: 3px; }
  .notes { width: 82px; padding-left: 2px; }
  .props { width: 72px; padding-left: 4px; }
  .edges { width: 14px; padding: 0; border: 0; }
  .orient { width: 119px; padding-left: 3px; }
  .assist { width: 31px; padding: 0; }
  .edges h2 { margin-left: -2px; }
  .big { display: flex; flex-direction: column; align-items: center; line-height: 6px; flex: none; }
  .big svg { width: 18px; height: 18px; margin-bottom: 3px; }
  .big .caret { margin-top: 3px; }
  .w20 { width: 22px; }
  .w24 { width: 25px; }
  .w26 { width: 26px; }
  .w30 { width: 30px; }
  .w36 { width: 36px; }
  .w42 { width: 40px; }
  .w52 { width: 52px; }
  .off { color: #bbb; }
  .col { display: flex; flex-direction: column; width: 11px; align-items: center; }
  .col.wide { width: 20px; align-items: flex-start; }
  .col.wide .small { margin-left: 3px; }
  .small { width: 11px; height: 11px; display: grid; place-items: center; flex: none; }
  .small .ic { width: 10px; height: 10px; }
  .small.menu { width: 17px; grid-template-columns: 11px 5px; }
  .on, .drop { background: #c3dfea; }
  .drop { width: 17px; height: 10px; margin-bottom: 1px; display: flex; align-items: center; gap: 1px; padding-left: 1px; }
  .rows { display: flex; flex-direction: column; }
  .rows.first { width: 63px; margin-left: -2px; }
  .rows.sep, .col.sep { border-left: 1px solid #ddd; padding-left: 2px; }
  .row { height: 10px; display: flex; align-items: center; text-align: left; }
  .row .ic { margin-right: 1px; }
  .grid { display: grid; grid-template-columns: 17px repeat(4, 11px); grid-auto-rows: 11px; margin: 0 1px 0 0; }
  .grid.note { grid-template-columns: repeat(4, 11px) 18px; margin-right: 2px; }
  .grid.note .small:nth-child(5n) { justify-self: center; }

  .work { flex: 1; min-height: 0; display: flex; }
  .center { flex: 1; min-width: 0; display: flex; flex-direction: column; }
  .strip { height: 11px; border-bottom: 1px solid #ccc; flex: none; display: flex; }
  .chip { width: 18px; background: linear-gradient(#0a6a8a 35%, #b5cdd5 35%, #7f9fac 65%, #0a6a8a 65%); background-clip: content-box; background-color: #0a6a8a; box-sizing: border-box; border: 2px solid #0a6a8a; }
  .tabs { flex: none; display: flex; height: 18px; padding-top: 2px; box-sizing: border-box; border-bottom: 2px solid #a9cbdc; }
  .tab { display: flex; align-items: center; padding: 0 2px 0 9px; border-right: 1px solid #ccc; gap: 2px; }
  .tab button { margin-left: 7px; }
  .tab button .ic { width: 6px; height: 6px; }
  .tab.active { background: #006487; color: #fff; padding-left: 8px; }
  .tabnav { margin-left: auto; align-self: center; }
  .tabnav svg { width: 28px; height: 8px; }
  main { flex: 1; position: relative; min-height: 0; background: #fff; }
  .sheet, .arrows { position: absolute; inset: 0; width: 100%; height: 100%; }
  .arrows { pointer-events: none; }
  .tb text { font-family: "Liberation Sans", sans-serif; font-size: 3px; font-weight: 700; fill: #111; }
  .tb .name { font: 6px "Liberation Sans Narrow", "Liberation Sans", sans-serif; }
  .tb .mid2 { font-size: 2px; text-anchor: middle; }
  .tb .cy { fill: #099; font-weight: 400; }

  .dialog { position: absolute; left: 360px; top: 81px; width: 306px; height: 237px; box-sizing: border-box; border: 2px solid #f11; background: #f0f0f0; display: flex; flex-direction: column; }
  .dtitle { height: 14px; background: #f4f4f4; display: flex; align-items: center; gap: 3px; padding: 0 4px 0 1px; }
  .dtitle svg { width: 10px; height: 8px; }
  .dtitle button { margin-left: auto; }
  .dtitle button :global(svg) { width: 9px; height: 9px; }
  .dbody { flex: 1; min-height: 0; display: flex; gap: 6px; padding: 4px 5px 4px 2px; }
  label { display: block; height: 8px; line-height: 8px; white-space: nowrap; }
  .left { width: 68px; display: flex; flex-direction: column; }
  .left label.second { margin-top: 9px; }
  select[size] { box-sizing: border-box; border: 1px solid #a5a8ad; background: #fff; overflow: hidden; width: 100%; scrollbar-width: none; }
  option { padding: 0 1px; min-height: 0; line-height: 7px; height: 7px; }
  #types { height: 51px; }
  #types option:checked { background: #0078d4 linear-gradient(#0078d4, #0078d4); color: #fff; }
  #styles { flex: 1; height: auto; padding: 1px 1px 1px 11px; }
  #styles option { height: 9px; line-height: 9px; }
  #styles option:checked { background: #eee linear-gradient(#eee, #eee); color: #222; }
  .combo { margin-top: 1px; display: grid; }
  .combo select { grid-area: 1 / 1; appearance: none; height: 11px; background: #fff; border: 1px solid #ddd; border-radius: 1px; padding: 0 1px; }
  .combo svg { grid-area: 1 / 1; width: 6px; height: 6px; place-self: center end; margin-right: 2px; pointer-events: none; }
  .btn { box-sizing: border-box; height: 12px; line-height: 10px; background: #fdfdfd; border: 1px solid #d5d5d5; border-radius: 2px; text-align: center; white-space: nowrap; flex: 1; }
  .btn:disabled { color: #bbb; background: #f5f5f5; border-color: #e6e6e6; }
  .primary { border-color: #0078d4; }
  .editor { margin-top: auto; flex: none; }
  .mid { width: 106px; display: flex; flex-direction: column; }
  .right { flex: 1; display: flex; flex-direction: column; padding: 9px 0 0; }
  .btns { display: flex; gap: 4px; }
  .marked { outline: 2px solid #f11; outline-offset: 1px; border-radius: 0; }
  .preview { width: 64px; height: 61px; background: #fff; margin: 7px 0; }
  .desc-label { line-height: 8px; }
  p { margin-top: 1px; padding: 2px 0 0 3px; height: 75px; border-top: 1px solid #e2e2e2; border-bottom: 1px solid #999; line-height: 7px; }
  .bottom { margin-top: auto; }

  .sheets { flex: none; height: 9px; background: #c4c4c4; display: flex; }
  .step { width: 9px; box-sizing: border-box; border: 1px solid #aaa; background: #ddd; display: grid; place-items: center; }
  .step svg { width: 6px; height: 6px; }
  .sheettab { display: grid; font-weight: 700; line-height: 9px; }
  .sheettab svg { grid-area: 1 / 1; width: 31px; height: 9px; }
  .sheettab span { grid-area: 1 / 1; }
  .newsheet svg { width: 20px; height: 9px; }
  aside { width: 15px; background: #fafafa; display: flex; flex-direction: column; align-items: center; gap: 8px; padding-top: 4px; padding-left: 2px; box-sizing: border-box; }
  aside .ic { width: 10px; height: 10px; }
  aside span { writing-mode: vertical-rl; font: 7px/9px Roboto, "Open Sans", sans-serif; margin: -8px 0 -1px; }

  footer { flex: none; height: 11px; margin-top: 1px; background: #006487; display: flex; justify-content: flex-end; align-items: center; gap: 3px; padding-right: 1px; }
  footer .ic { width: 8px; height: 8px; }
  footer button { width: 9px; }
  footer input { appearance: none; width: 57px; height: 8px; background: linear-gradient(#fff, #fff) center / 100% 1px no-repeat; }
  footer input::-webkit-slider-thumb { appearance: none; width: 3px; height: 6px; background: #fff; }
</style>
